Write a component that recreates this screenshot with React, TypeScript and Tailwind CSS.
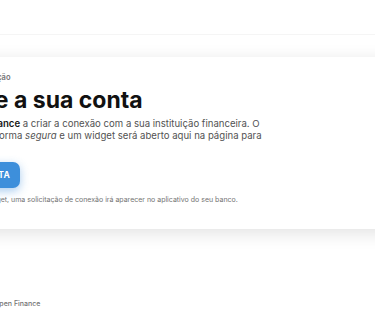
export default function App() {
  return (
    <div className="w-[375px] h-[315px] overflow-hidden bg-white font-['Inter',sans-serif] relative">
      <div className="w-[720px] -ml-[110px] flex flex-col">
        <header className="h-[35px] border-b border-neutral-100 flex items-center pl-[93px]">
          <svg width="16" height="10" viewBox="0 0 16 10" className="text-neutral-500 -mt-[5px]">
            <rect x="0" y="1" width="16" height="2" rx="1" fill="currentColor" />
            <rect x="0" y="4.5" width="16" height="1.5" rx="0.75" fill="currentColor" opacity="0.6" />
            <rect x="0" y="7.5" width="16" height="1.5" rx="0.75" fill="currentColor" opacity="0.35" />
          </svg>
        </header>

        <section className="mt-[22px] bg-white rounded-xl shadow-[0_4px_18px_rgba(0,0,0,0.12)] pl-[24px] pt-[15px] pb-[24px]">
          <p className="text-[7.5px] leading-[11px] font-semibold text-neutral-500 whitespace-nowrap ml-[3px]">
            Etapa 1 de 2 · Autorização
          </p>
          <h1 className="mt-[3px] text-[23px] leading-[28px] font-bold text-[#111] whitespace-nowrap">
            Conecte a sua conta
          </h1>
          <p className="mt-[4px] -ml-[7px] text-[9.6px] leading-[11.5px] text-neutral-600 whitespace-nowrap">
            Autorize o <strong className="font-semibold text-neutral-900">Open Finance</strong> a criar a conexão com a sua instituição financeira. O
            <br />
            seu login é feito de forma <em>segura</em> e um widget será aberto aqui na página para
          </p>
          <div className="mt-[21px] w-[106px] flex justify-end">
            <button className="h-[26px] px-[10px] rounded-[7px] bg-[#3d8fdb] text-white text-[8.5px] font-bold tracking-wide whitespace-nowrap shadow-[0_3px_10px_rgba(61,143,219,0.45)]">
              CONECTAR CONTA
            </button>
          </div>
          <p className="mt-[7px] ml-[13px] text-[7px] leading-[10px] text-neutral-500 whitespace-nowrap">
            Após concluir no widget, uma solicitação de conexão irá aparecer no aplicativo do seu banco.
          </p>
        </section>

        <footer className="mt-[70px] pl-[104px]">
          <p className="text-[7px] font-medium text-neutral-500 whitespace-nowrap">Open Finance</p>
        </footer>
      </div>
    </div>
  );
}
